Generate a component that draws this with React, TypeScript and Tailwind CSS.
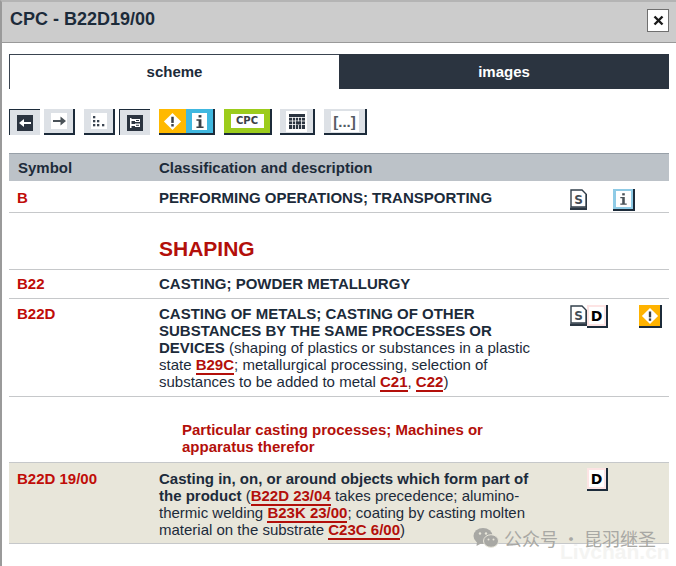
import React from "react";

function ToolButton({
  active,
  className,
  children,
}: {
  active?: boolean;
  className: string;
  children: React.ReactNode;
}) {
  return (
    <div
      className={
        active
          ? `flex h-[26px] items-center justify-center border-t border-l border-[#1c2b3a] bg-[#dde1e6] ${className}`
          : `flex h-[26px] items-center justify-center border-r-2 border-b-2 border-[#1c2b3a] bg-[#dde1e6] ${className}`
      }
    >
      {children}
    </div>
  );
}

function WhiteBox({ children }: { children: React.ReactNode }) {
  return <div className="flex h-[16px] w-[16px] items-center justify-center bg-white">{children}</div>;
}

function Diamond({ size = 19 }: { size?: number }) {
  return (
    <svg width={size} height={size} viewBox="0 0 20 20">
      <path d="M10 1 19 10 10 19 1 10Z" fill="#fff" />
      <rect x="8.700" y="5" width="2.600" height="6.500" fill="#3a3f45" />
      <rect x="8.700" y="12.700" width="2.600" height="2.600" fill="#3a3f45" />
    </svg>
  );
}

function InfoGlyph() {
  return (
    <svg width="10" height="15" viewBox="0 0 14 18">
      <rect x="5" y="0" width="4" height="3.400" fill="#3a4046" />
      <path d="M2 6h7v10h3v2H2v-2h3V8H2Z" fill="#3a4046" />
    </svg>
  );
}

function SDoc() {
  return (
    <svg width="17" height="21" viewBox="0 0 17 21" className="block">
      <path d="M1 1h11l4 4v13H1Z" fill="#fff" stroke="#33404c" strokeWidth="1.400" />
      <path d="M0 18.500h17V21H0Z" fill="#2b3743" />
      <path d="M16 5v15h1V5Z" fill="#2b3743" />
      <text x="8.500" y="15" textAnchor="middle" fontSize="12" fontWeight="700" fontFamily="'DejaVu Sans', sans-serif" fill="#444c54">
        S
      </text>
    </svg>
  );
}

function DBadge() {
  return (
    <div className="flex h-[23px] w-[21px] items-center justify-center border-r-2 border-b-2 border-[#1c2b3a] bg-[#fde4e4]">
      <div className="flex h-[17px] w-[15px] items-center justify-center bg-white font-['DejaVu_Sans',sans-serif] text-[14px] leading-none font-bold text-black">
        D
      </div>
    </div>
  );
}

function InfoBadge() {
  return (
    <div className="flex h-[22px] w-[22px] items-center justify-center border-r-2 border-b-2 border-[#1c2b3a] bg-[#8fcbe6]">
      <div className="flex h-[16px] w-[15px] items-center justify-center bg-white">
        <svg width="9" height="14" viewBox="0 0 14 18">
          <rect x="5" y="0" width="4" height="3.400" fill="#4a5258" />
          <path d="M2 6h7v10h3v2H2v-2h3V8H2Z" fill="#4a5258" />
        </svg>
      </div>
    </div>
  );
}

function WarnBadge() {
  return (
    <div className="flex h-[23px] w-[23px] items-center justify-center border-r-2 border-b-2 border-[#1c2b3a] bg-[#ffb300]">
      <Diamond size={18} />
    </div>
  );
}

function Ref({ children }: { children: React.ReactNode }) {
  return <span className="border-b-2 border-[#b30f0a] font-bold text-[#b30f0a]">{children}</span>;
}

function Row({
  symbol,
  icons,
  shaded,
  className,
  children,
}: {
  symbol: string;
  icons?: React.ReactNode;
  shaded?: boolean;
  className: string;
  children: React.ReactNode;
}) {
  return (
    <div className={`flex border-b border-[#c6c8ca] ${shaded ? "bg-[#e8e6da]" : ""} ${className}`}>
      <div className="w-[150px] pl-2 font-bold text-[#c00d08]">{symbol}</div>
      <div className="w-[400px]">{children}</div>
      <div className="flex-1">{icons}</div>
    </div>
  );
}

function GroupRow({ className, children }: { className: string; children: React.ReactNode }) {
  return <div className={`border-b border-[#c6c8ca] font-bold text-[#b30f0a] ${className}`}>{children}</div>;
}

export default function App() {
  return (
    <div className="relative h-[566px] w-[676px] overflow-hidden border-t-2 border-l-2 border-t-[#b4b4b4] border-l-[#9a9a9a] bg-white font-['Liberation_Sans',sans-serif] text-[15px] leading-[17px] text-[#1c2b3a]">
      <div className="flex h-[41px] items-center justify-between border-b border-[#999999] bg-[#cccccc] pr-[7px] pl-[8px]">
        <h1 className="pb-[6px] text-[18px] font-bold">CPC - B22D19/00</h1>
        <div className="mb-[3px] flex h-[23px] w-[22px] items-center justify-center border border-[#6f6f6f] bg-white">
          <svg width="11" height="11" viewBox="0 0 11 11">
            <path d="M1.500 1.500 9.500 9.500M9.500 1.500 1.500 9.500" stroke="#1a1a1a" strokeWidth="2.400" />
          </svg>
        </div>
      </div>

      <div className="mx-[7px] mt-[11px] flex h-[35px] w-[660px] font-bold">
        <div className="flex w-[330px] items-center justify-center border-t border-l border-[#3a4450] bg-white pb-[2px]">scheme</div>
        <div className="flex w-[330px] items-center justify-center bg-[#2b3440] pb-[1px] text-white">images</div>
      </div>

      <div className="mx-[7px] mt-[20px] flex items-start">
        <ToolButton active className="w-[31px]">
          <svg width="16" height="16" viewBox="0 0 16 16">
            <rect width="16" height="16" fill="#2b3440" />
            <path d="M2 8 7 4v3h7v2H7v3Z" fill="#fff" />
          </svg>
        </ToolButton>
        <ToolButton className="ml-[4px] w-[31px]">
          <WhiteBox>
            <svg width="14" height="12" viewBox="0 0 14 12">
              <path d="M14 6 8.500 1.500V5H1v2h7.500v3.500Z" fill="#4a5258" />
            </svg>
          </WhiteBox>
        </ToolButton>
        <ToolButton className="ml-[9px] w-[31px]">
          <WhiteBox>
            <svg width="14" height="13" viewBox="0 0 14 13" fill="#3a4450">
              <rect x="1" y="1" width="2.300" height="2.300" />
              <rect x="1" y="5" width="2.300" height="2.300" />
              <rect x="5" y="5" width="2.300" height="2.300" />
              <rect x="1" y="9" width="2.300" height="2.300" />
              <rect x="5" y="9" width="2.300" height="2.300" />
              <rect x="10" y="9" width="2.300" height="2.300" />
            </svg>
          </WhiteBox>
        </ToolButton>
        <ToolButton active className="ml-[4px] w-[31px]">
          <svg width="16" height="16" viewBox="0 0 16 16">
            <rect width="16" height="16" fill="#2b3440" />
            <path d="M3 3h1.500v10H3ZM4.500 4H13v3H8V6H4.500ZM4.500 9H8V8.500h5V12H8v-1H4.500Z" fill="#fff" />
            <rect x="9" y="5" width="3" height="1" fill="#2b3440" />
            <rect x="9" y="9.800" width="3" height="1" fill="#2b3440" />
          </svg>
        </ToolButton>
        <div className="ml-[9px] flex h-[26px] w-[56px] border-r-2 border-b-2 border-[#1c2b3a]">
          <div className="flex w-[27px] items-center justify-center bg-[#ffb900]">
            <Diamond />
          </div>
          <div className="flex flex-1 items-center justify-center bg-[#40b8e0]">
            <div className="flex h-[17px] w-[15px] items-center justify-center bg-white">
              <InfoGlyph />
            </div>
          </div>
        </div>
        <div className="ml-[9px] flex h-[26px] w-[48px] items-center justify-center border-r-2 border-b-2 border-[#1c2b3a] bg-[#9ccc1c]">
          <div className="flex h-[14px] w-[33px] items-center justify-center bg-white font-['DejaVu_Sans',sans-serif] text-[10px] leading-none font-bold text-[#3a4046]">
            CPC
          </div>
        </div>
        <ToolButton className="ml-[8px] w-[35px]">
          <div className="flex h-[21px] w-[21px] items-center justify-center bg-white">
            <svg width="16" height="15" viewBox="0 0 16 15">
              <rect width="16" height="15" fill="#2b3440" />
              <path d="M3.500 3v12M6.500 3v12M9.500 3v12M12.500 3v12M0 3.500h16M0 7h16M0 10.500h16" stroke="#fff" strokeWidth="0.800" />
              <rect x="7" y="7.500" width="5" height="3" fill="#2b3440" />
            </svg>
          </div>
        </ToolButton>
        <ToolButton className="ml-[9px] w-[43px]">
          <div className="flex h-[21px] w-[28px] items-center justify-center bg-white text-[15px] leading-none font-bold text-[#555c64]">
            [...]
          </div>
        </ToolButton>
      </div>

      <div className="mx-[7px] mt-[18px] w-[660px]">
        <div className="flex h-[28px] items-center border-t border-[#98a0a8] bg-[#bcc2c8] pb-[1px] font-bold">
          <div className="w-[150px] pl-[9px]">Symbol</div>
          <div>Classification and description</div>
        </div>

        <Row
          symbol="B"
          className="h-[32px] pt-[8px]"
          icons={
            <div className="flex pl-[11px]">
              <SDoc />
              <div className="ml-[26px]">
                <InfoBadge />
              </div>
            </div>
          }
        >
          <span className="font-bold">PERFORMING OPERATIONS; TRANSPORTING</span>
        </Row>

        <GroupRow className="h-[57px] pt-[24px] pl-[150px] text-[21px] leading-[24px]">SHAPING</GroupRow>

        <Row symbol="B22" className="h-[29px] pt-[5px]">
          <span className="font-bold">CASTING; POWDER METALLURGY</span>
        </Row>

        <Row
          symbol="B22D"
          className="h-[98px] pt-[6px]"
          icons={
            <div className="flex pl-[11px]">
              <SDoc />
              <div>
                <DBadge />
              </div>
              <div className="ml-[31px]">
                <WarnBadge />
              </div>
            </div>
          }
        >
          <div className="w-[376px]">
            <span className="font-bold">CASTING OF METALS; CASTING OF OTHER SUBSTANCES BY THE SAME PROCESSES OR DEVICES</span> (shaping of plastics or substances in a plastic state <Ref>B29C</Ref>; metallurgical processing, selection of substances to be added to metal <Ref>C21</Ref>, <Ref>C22</Ref>)
          </div>
        </Row>

        <GroupRow className="h-[66px] pt-[24px] pl-[173px]">
          <div className="w-[320px]">Particular casting processes; Machines or apparatus therefor</div>
        </GroupRow>

        <Row
          symbol="B22D 19/00"
          shaded
          className="h-[81px] pt-[7px]"
          icons={
            <div className="-mt-[2px] pl-[28px]">
              <DBadge />
            </div>
          }
        >
          <div className="w-[376px]">
            <span className="font-bold">Casting in, on, or around objects which form part of the product</span> (<Ref>B22D 23/04</Ref> takes precedence; alumino-thermic welding <Ref>B23K 23/00</Ref>; coating by casting molten material on the substrate <Ref>C23C 6/00</Ref>)
          </div>
        </Row>
      </div>

      <div className="absolute top-[525px] left-[471px] flex items-center text-[#a8a8a4]">
        <svg width="26" height="22" viewBox="0 0 26 22" fill="#a8a8a4">
          <ellipse cx="10" cy="9" rx="9.500" ry="8" />
          <path d="M4 14 3.500 19 9 16Z" />
          <ellipse cx="18" cy="14" rx="7.500" ry="6.300" stroke="#e8e6da" strokeWidth="1" />
          <circle cx="7" cy="6.500" r="1.200" fill="#e8e6da" />
          <circle cx="13" cy="6.500" r="1.200" fill="#e8e6da" />
          <circle cx="15.500" cy="12.500" r="1" fill="#e8e6da" />
          <circle cx="20.500" cy="12.500" r="1" fill="#e8e6da" />
        </svg>
        <span className="ml-[5px] font-['Noto_Sans_CJK_SC',sans-serif] text-[18px] leading-[22px] whitespace-nowrap">公众号 · 昆羽继圣</span>
      </div>
      <div className="absolute top-[538px] left-[558px] text-[21px] leading-[24px] font-bold whitespace-nowrap text-[#f4f4f2]">Livchan.cn</div>
    </div>
  );
}
